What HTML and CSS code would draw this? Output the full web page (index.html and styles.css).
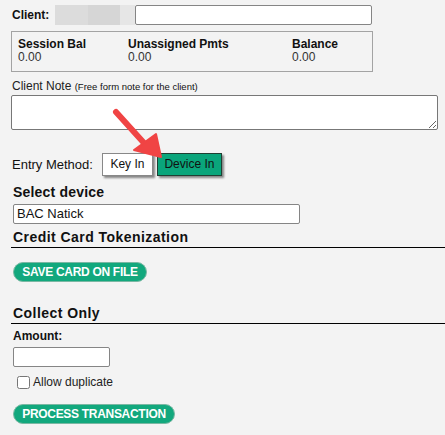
FILE: index.html
```html
<!DOCTYPE html>
<html>
<head>
<meta charset="utf-8">
<link rel="stylesheet" href="styles.css">
</head>
<body>
<div class="page">
  <div class="client-row">
    <span class="lbl-bold">Client:</span>
    <span class="redact"><span class="r1"></span><span class="r2"></span><span class="r3"></span></span>
    <input class="client-input" type="text">
  </div>
  <div class="bal-box">
    <div class="bal-col c1"><div class="bal-h">Session Bal</div><div class="bal-v">0.00</div></div>
    <div class="bal-col c2"><div class="bal-h">Unassigned Pmts</div><div class="bal-v">0.00</div></div>
    <div class="bal-col c3"><div class="bal-h">Balance</div><div class="bal-v">0.00</div></div>
  </div>
  <div class="note-lbl">Client Note <small>(Free form note for the client)</small></div>
  <textarea class="note"></textarea>
  <div class="entry-row">
    <span class="entry-lbl">Entry Method:</span>
    <button class="btn-key">Key In</button>
    <button class="btn-dev">Device In</button>
  </div>
  <div class="sec-h first">Select device</div>
  <div class="device-sel">BAC Natick</div>
  <div class="sec-h line">Credit Card Tokenization</div>
  <button class="pill pill-save">SAVE CARD ON FILE</button>
  <div class="sec-h line collect">Collect Only</div>
  <div class="lbl-bold amt-lbl">Amount:</div>
  <input class="amt" type="text">
  <label class="dup"><input type="checkbox"> Allow duplicate</label>
  <button class="pill pill-proc">PROCESS TRANSACTION</button>
  <svg class="arrow" width="60" height="60" viewBox="0 0 60 60">
    <line x1="5" y1="5" x2="33" y2="36" stroke="#f04444" stroke-width="6" stroke-linecap="round"/>
    <polygon points="23,43 45,27 50,50" fill="#f04444" stroke="#f04444" stroke-width="2" stroke-linejoin="round"/>
  </svg>
</div>
</body>
</html>
```
FILE: styles.css
```css
* { box-sizing: border-box; }
html, body { margin: 0; padding: 0; background: #f3f3f3; }
body { font-family: "Liberation Sans", Arial, sans-serif; font-size: 12px; color: #111; width: 445px; height: 435px; overflow: hidden; }
.page { position: relative; padding-top: 5px; }
.client-row { display: flex; align-items: center; height: 20px; padding-left: 12px; }
.lbl-bold { font-weight: bold; font-size: 12px; }
.redact { display: flex; height: 20px; margin-left: 6px; }
.redact span { display: block; height: 20px; }
.r1 { width: 33px; background: #dcdcdc; }
.r2 { width: 32px; background: #d6d6d6; }
.r3 { width: 15px; background: #e6e6e6; }
.client-input { width: 237px; height: 20px; border: 1px solid #858585; border-radius: 2px; background: #fff; margin: 0; padding: 0; }
.bal-box { margin: 6px 0 0 11px; width: 362px; height: 41px; border: 1px solid #a3a3a3; display: flex; padding: 5px 0 0 6px; }
.bal-h { font-weight: bold; font-size: 12px; line-height: 14px; color: #111; }
.bal-v { font-size: 12px; line-height: 12px; color: #333; }
.c1 { width: 110px; }
.c2 { width: 164px; }
.note-lbl { margin: 7px 0 0 12px; font-size: 12px; line-height: 14px; color: #222; }
.note-lbl small { font-size: 9.5px; color: #111; }
.note { display: block; margin: 1px 0 0 11px; width: 427px; height: 35px; border: 1px solid #777; border-radius: 2px; background: #fff; resize: both; padding: 2px; }
.entry-row { display: flex; align-items: center; margin: 22px 0 0 12px; height: 24px; }
.entry-lbl { font-size: 13px; color: #111; margin-right: 9px; }
.btn-key, .btn-dev { font-family: "Liberation Sans", Arial, sans-serif; font-size: 12px; height: 23px; margin: 0; padding: 0; white-space: nowrap; box-shadow: 2px 2px 2px rgba(0,0,0,0.45); color: #111; }
.btn-key { background: #fff; border: 1px solid #888; width: 51px; }
.btn-dev { background: #0aa57b; border: 1px solid #1f3f33; width: 65px; margin-left: 4px; }
.sec-h { font-weight: bold; font-size: 14px; line-height: 16px; margin: 5px 0 0 13px; color: #111; letter-spacing: 0.2px; }
.sec-h.first { margin-top: 8px; }
.sec-h.line { margin-left: 11px; padding-left: 2px; border-bottom: 1px solid #000; padding-bottom: 2px; letter-spacing: 0.45px; }
.device-sel { margin: 4px 0 0 13px; width: 287px; height: 20px; border: 1px solid #858585; border-radius: 2px; background: #fff; font-size: 13px; line-height: 18px; padding-left: 3px; color: #111; }
.sec-h.line:not(.collect) { margin-top: 5px; }
.pill { display: block; font-family: "Liberation Sans", Arial, sans-serif; font-weight: bold; font-size: 12px; color: #fff; background: #12a87d; border: 1px solid #7ab8a3; border-radius: 10px; height: 20px; padding: 0; margin-left: 13px; letter-spacing: -0.3px; white-space: nowrap; }
.pill-save { margin-top: 14px; width: 134px; }
.collect { margin-top: 23px !important; }
.amt-lbl { margin: 5px 0 0 13px; line-height: 14px; }
.amt { display: block; margin: 4px 0 0 13px; width: 97px; height: 20px; border: 1px solid #858585; border-radius: 2px; background: #fff; padding: 0; }
.dup { display: flex; align-items: center; margin: 8px 0 0 17px; font-size: 12px; color: #222; height: 14px; }
.dup input { margin: 0 3px 0 0; width: 13px; height: 13px; }
.pill-proc { margin-top: 15px; width: 162px; }
.arrow { position: absolute; left: 111px; top: 107px; }
```
